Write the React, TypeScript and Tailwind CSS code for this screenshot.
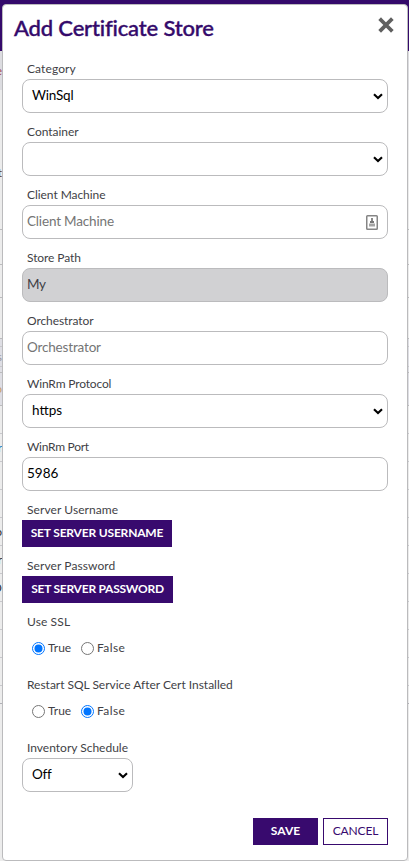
import type { ReactNode } from 'react';

function Chevron() {
  return (
    <svg width="10" height="7" viewBox="0 0 10 7" className="shrink-0" fill="none" stroke="#000" strokeWidth="2.1">
      <path d="M1 1.2 5 5l4-3.8" />
    </svg>
  );
}

function Field({ label, tracking = '', children }: { label: string; tracking?: string; children: ReactNode }) {
  return (
    <div className="mb-[10px]">
      <div className="h-[19px] whitespace-nowrap pl-[5px] text-[12px] leading-[18px] text-[#3f3f46]">
        <span className={tracking}>{label}</span>
      </div>
      {children}
    </div>
  );
}

const box = 'flex h-[34px] items-center justify-between rounded-[8px] border border-[#bbbbbd] text-[13.5px]';

function Select({ value, width = 'w-full', tracking = '' }: { value: string; width?: string; tracking?: string }) {
  return (
    <div className={`${box} ${width} bg-white pl-[9px] pr-[4px] text-black`}>
      <span className={`pb-[1px] ${tracking}`}>{value}</span>
      <Chevron />
    </div>
  );
}

function TextBox({ value, tone, tracking = '', children }: { value: string; tone: string; tracking?: string; children?: ReactNode }) {
  return (
    <div className={`${box} w-full pl-[4px] pr-[9px] ${tone}`}>
      <span className={`pb-[1px] ${tracking}`}>{value}</span>
      {children}
    </div>
  );
}

function ContactIcon() {
  return (
    <svg width="12" height="15" viewBox="0 0 12 15" className="shrink-0">
      <rect x="0.75" y="0.75" width="10.5" height="13.5" rx="0.8" fill="#fff" stroke="#858585" strokeWidth="1.5" />
      <rect x="5" y="3" width="2" height="3" fill="#888" />
      <rect x="4" y="6" width="4" height="2" fill="#777" />
      <rect x="3" y="8.5" width="6" height="3" fill="#a5a5a5" />
    </svg>
  );
}

function Radio({ label, checked, tracking = '' }: { label: string; checked: boolean; tracking?: string }) {
  return (
    <div className="flex items-center text-[12px] leading-[16px] text-[#3f3f46]">
      <svg width="13" height="13" viewBox="0 0 13 13" className="mr-[3px]">
        <circle cx="6.5" cy="6.5" r="6" fill="#fff" stroke={checked ? '#0075ff' : '#767676'} />
        {checked && <circle cx="6.5" cy="6.5" r="4" fill="#0075ff" />}
      </svg>
      <span className={tracking}>{label}</span>
    </div>
  );
}

function RadioRow({ value }: { value: boolean }) {
  return (
    <div className="flex h-[34px] items-center pl-[10px] pb-[2px]">
      <div className="w-[49px]"><Radio label="True" checked={value} /></div>
      <Radio label="False" checked={!value} tracking="tracking-[0.4px]" />
    </div>
  );
}

const rows = [
  { h: 'h-[39px]', c: 'bg-[#dcdce0]', t: 'e', k: 'text-[#a04050]' },
  { h: 'h-[140px]', c: 'border-b border-[#bbbbbd] pt-[27px]', t: 't', k: 'text-[#5a3a20]' },
  { h: 'h-[35px]', c: 'border-b border-[#bbbbbd]', t: '', k: '' },
  { h: 'h-[33px]', c: 'border-b border-[#bbbbbd]', t: '', k: '' },
  { h: 'h-[41px]', c: 'border-b border-[#bbbbbd]', t: '', k: '' },
  { h: 'h-[8px]', c: 'border-b border-[#c8c8cc] bg-[#dedee4]', t: '', k: '' },
  { h: 'h-[20px]', c: 'border-b border-[#c8c8cc] bg-[#dedee4]', t: 's', k: 'text-[#9999a0]' },
  { h: 'h-[6px]', c: 'border-b border-[#bbbbbd] bg-[#dedee4]', t: '', k: '' },
  { h: 'h-[33px]', c: 'border-b border-[#bbbbbd] bg-[#dedee4]', t: 'o', k: 'text-[#c8a070]' },
  { h: 'h-[28px]', c: 'border-b border-[#c8c8cc]', t: '', k: '' },
  { h: 'h-[28px]', c: 'border-b border-[#c8c8cc]', t: 'r', k: 'text-[#2584c6]' },
  { h: 'h-[28px]', c: 'border-b border-[#c8c8cc]', t: '', k: '' },
  { h: 'h-[28px]', c: 'border-b border-[#c8c8cc]', t: '', k: '' },
  { h: 'h-[28px]', c: 'border-b border-[#c8c8cc]', t: 'o', k: 'text-[#333]' },
  { h: 'h-[28px]', c: 'border-b border-[#c8c8cc]', t: 'r', k: 'text-[#333]' },
  { h: 'h-[28px]', c: 'border-b border-[#c8c8cc]', t: 'D', k: 'text-[#333]' },
  { h: 'h-[28px]', c: 'border-b border-[#c8c8cc]', t: '', k: '' },
  { h: 'h-[28px]', c: 'border-b border-[#c8c8cc]', t: '', k: '' },
  { h: 'h-[28px]', c: 'border-b border-[#c8c8cc]', t: '', k: '' },
  { h: 'h-[18px]', c: 'border-b border-[#b0b0b6]', t: '', k: '' },
];

const action = 'flex h-[27px] items-center justify-center whitespace-nowrap pb-[1px] text-[12px]';

export default function App() {
  return (
    <div className="relative h-[861px] w-[409px] overflow-hidden bg-[#ececec] font-['Lato','Liberation_Sans',sans-serif]">
      <div className="h-[51px] bg-[#340a6b]" />
      {rows.map((r, i) => (
        <div key={i} className={`flex items-center ${r.h} ${r.c}`}>
          <div className={`flex w-[2px] justify-end overflow-hidden text-[12px] leading-none ${r.k}`}>{r.t}</div>
        </div>
      ))}

      <div className="absolute left-[2px] top-[4px] flex h-[857px] w-[406px] flex-col rounded-[4px] border border-[#bbbbbd] bg-white">
        <div className="flex h-[55px] items-start justify-between pl-[11px] pr-[13px]">
          <h1 className="mt-[9px] whitespace-nowrap text-[22px] font-medium leading-[28px] tracking-[-0.17px] text-[#340a6b] [-webkit-text-stroke:0.4px_#340a6b] [font-variant-ligatures:none]">Add Certificate Store</h1>
          <svg width="16" height="16" viewBox="0 0 16 16" className="mt-[12px]" stroke="#606060" strokeWidth="3.8" strokeLinecap="square">
            <path d="M3 3l10 10M13 3l-10 10" />
          </svg>
        </div>

        <div className="px-[19px]">
          <Field label="Category" tracking="tracking-[0.1px]"><Select value="WinSql" tracking="tracking-[-0.2px]" /></Field>
          <Field label="Container" tracking="tracking-[-0.02px]"><Select value="" /></Field>
          <Field label="Client Machine" tracking="tracking-[-0.06px]">
            <TextBox value="Client Machine" tone="bg-white text-[#757575]" tracking="tracking-[-0.17px]"><ContactIcon /></TextBox>
          </Field>
          <Field label="Store Path" tracking="tracking-[-0.08px]"><TextBox value="My" tone="bg-[#d1d1d3] text-[#3f3f46]" tracking="tracking-[-0.5px]" /></Field>
          <Field label="Orchestrator" tracking="tracking-[-0.08px]"><TextBox value="Orchestrator" tone="bg-white text-[#757575]" tracking="tracking-[-0.17px]" /></Field>
          <Field label="WinRm Protocol" tracking="tracking-[-0.16px]"><Select value="https" /></Field>
          <Field label="WinRm Port" tracking="tracking-[-0.28px]"><TextBox value="5986" tone="bg-white text-black" /></Field>
          <Field label="Server Username" tracking="tracking-[0.08px]">
            <button className={`${action} w-[150px] bg-[#380a6e] font-bold tracking-[-0.18px] text-white`}>SET SERVER USERNAME</button>
          </Field>
          <Field label="Server Password" tracking="tracking-[0.08px]">
            <button className={`${action} w-[151px] bg-[#380a6e] font-bold tracking-[-0.24px] text-white`}>SET SERVER PASSWORD</button>
          </Field>
          <Field label="Use SSL" tracking="tracking-[0.12px]"><RadioRow value={true} /></Field>
          <Field label="Restart SQL Service After Cert Installed" tracking="tracking-[-0.02px]"><RadioRow value={false} /></Field>
          <Field label="Inventory Schedule"><Select value="Off" width="w-[111px]" tracking="tracking-[-0.2px]" /></Field>
        </div>

        <div className="mt-[16px] flex justify-end gap-[5px] pr-[19px]">
          <button className={`${action} w-[65px] bg-[#380a6e] font-bold text-white`}>SAVE</button>
          <button className={`${action} w-[65px] border border-[#380a6e] bg-white tracking-[-0.15px] text-[#380a6e]`}>CANCEL</button>
        </div>
      </div>
    </div>
  );
}
